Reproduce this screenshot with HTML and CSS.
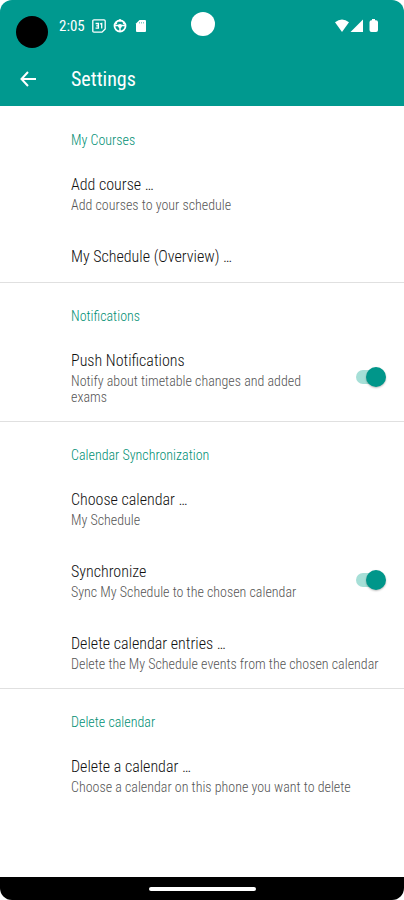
FILE: index.html
```html
<!DOCTYPE html>
<html lang="en">
<head>
<meta charset="utf-8">
<meta name="viewport" content="width=device-width, initial-scale=1">
<title>Settings</title>
<link rel="stylesheet" href="styles.css">
</head>
<body>
<div class="phone">
  <header class="top">
    <div class="status">
      <span class="camera"></span>
      <span class="time">2:05</span>
      <svg class="icon" viewBox="0 0 14 14" aria-hidden="true"><path d="M2 .8h10q1.200 0 1.200 1.200v8L10 13.200H2Q.8 13.200.8 12V2Q.8.8 2 .8z" fill="none" stroke="currentColor" stroke-width="1.300"/><path d="M3.600 4.500h2.800v4.600H3.600M4.200 6.800h2.200M8 5l1.700-.6v5" fill="none" stroke="currentColor" stroke-width="1.300"/></svg>
      <svg class="icon" viewBox="0 0 14 14" aria-hidden="true"><circle cx="7" cy="7" r="5.500" fill="none" stroke="currentColor" stroke-width="1.800"/><path d="M1.500 6.500h11M7 7v5.500M7 0v2.500M2 3.500l2 1M12 3.500l-2 1" stroke="currentColor" stroke-width="1.500"/><circle cx="7" cy="7" r="2" fill="currentColor"/></svg>
      <svg class="icon" viewBox="0 0 14 14" aria-hidden="true"><path d="M5.500 1H11q1 0 1 1v10q0 1-1 1H3q-1 0-1-1V4.500z" fill="currentColor"/><path d="M5.500 3v1.500M7.500 3v1.500M9.500 3v1.500" stroke="#00998f" stroke-width=".5"/></svg>
      <span class="lens"></span>
      <svg class="signals" viewBox="0 0 44 14" aria-hidden="true"><path d="M0 3.200Q7-2.200 14 3.200L7 13z" fill="currentColor"/><path d="M28 .5V13H15.500z" fill="currentColor"/><path d="M37 0h3v1.300h1q2 0 2 2V11q0 2-2 2h-4.500q-2 0-2-2V3.300q0-2 2-2h.5z" fill="currentColor"/></svg>
    </div>
    <div class="bar">
      <button class="back" type="button" aria-label="Back"><svg viewBox="0 0 16 16" aria-hidden="true"><path d="M8 1L1.500 8 8 15M1.500 8H16" fill="none" stroke="currentColor" stroke-width="2"/></svg></button>
      <h1>Settings</h1>
    </div>
  </header>
  <main>
    <section>
      <h2>My Courses</h2>
      <a class="row" href="#add"><span class="title">Add course …</span><span class="summary">Add courses to your schedule</span></a>
      <a class="row single" href="#overview"><span class="title">My Schedule (Overview) …</span></a>
    </section>
    <section>
      <h2>Notifications</h2>
      <label class="row toggle"><span class="text"><span class="title">Push Notifications</span><span class="summary">Notify about timetable changes and added exams</span></span><input class="switch" type="checkbox" role="switch" checked></label>
    </section>
    <section>
      <h2>Calendar Synchronization</h2>
      <a class="row" href="#choose"><span class="title">Choose calendar …</span><span class="summary">My Schedule</span></a>
      <label class="row toggle"><span class="text"><span class="title">Synchronize</span><span class="summary">Sync My Schedule to the chosen calendar</span></span><input class="switch" type="checkbox" role="switch" checked></label>
      <a class="row" href="#entries"><span class="title">Delete calendar entries …</span><span class="summary">Delete the My Schedule events from the chosen calendar</span></a>
    </section>
    <section>
      <h2>Delete calendar</h2>
      <a class="row" href="#delete"><span class="title">Delete a calendar …</span><span class="summary">Choose a calendar on this phone you want to delete</span></a>
    </section>
  </main>
  <footer><span class="handle"></span></footer>
</div>
</body>
</html>
```
FILE: styles.css
```css
* { box-sizing: border-box; }
body { margin: 0; background: #fff; font-family: "Roboto Condensed", Roboto, sans-serif; }
.phone { min-height: 100vh; display: flex; flex-direction: column; overflow: hidden; border-radius: 12px; background: #fff; }
.top { background: #00998f; color: #fff; }
.status { position: relative; height: 52px; padding: 0 25px 0 16px; display: flex; align-items: center; gap: 7px; }
.camera { width: 32px; height: 32px; margin-top: 12px; border-radius: 50%; background: #000; }
.time { margin-left: 4px; font-size: 15px; }
.icon { width: 14px; height: 14px; }
.lens { position: absolute; left: 50%; top: 12px; width: 24px; height: 24px; margin-left: -11px; border-radius: 50%; background: #fff; }
.signals { width: 44px; height: 14px; margin-left: auto; }
.bar { height: 54px; display: flex; align-items: center; padding: 0 20px; }
.back { width: 51px; height: 48px; padding: 0; border: 0; background: none; color: inherit; display: flex; align-items: center; }
.back svg { width: 16px; height: 16px; }
h1 { margin: 0; font-size: 20px; line-height: 24px; font-weight: 400; }
main { flex: 1; padding-top: 1px; }
section { border-bottom: 1px solid #e0e0e0; }
section:last-child { border-bottom: 0; }
h2 { margin: 0; padding: 24px 16px 8px 71px; font-size: 14px; line-height: 18px; font-weight: 300; color: #008f74; }
.row { display: block; padding: 16px 16px 16px 71px; color: inherit; text-decoration: none; }
.single { padding-bottom: 13px; }
.title, .summary { display: block; font-weight: 300; }
.title { font-size: 16px; line-height: 24px; color: #111; }
.summary { font-size: 14px; line-height: 16px; color: #555; }
.toggle { display: flex; align-items: center; gap: 32px; }
.text { flex: 1; }
.switch { appearance: none; position: relative; width: 32px; height: 20px; margin: 0 1px 0 0; }
.switch::before { content: ""; position: absolute; left: 1px; top: 3px; width: 28px; height: 14px; border-radius: 7px; background: #a6dfd7; }
.switch::after { content: ""; position: absolute; right: 1px; top: 0; width: 20px; height: 20px; border-radius: 50%; background: #00968a; box-shadow: 0 1px 2px #0004; }
footer { height: 23px; background: #000; display: flex; align-items: center; justify-content: center; }
.handle { width: 107px; height: 4px; border-radius: 2px; background: #fff; }
```
